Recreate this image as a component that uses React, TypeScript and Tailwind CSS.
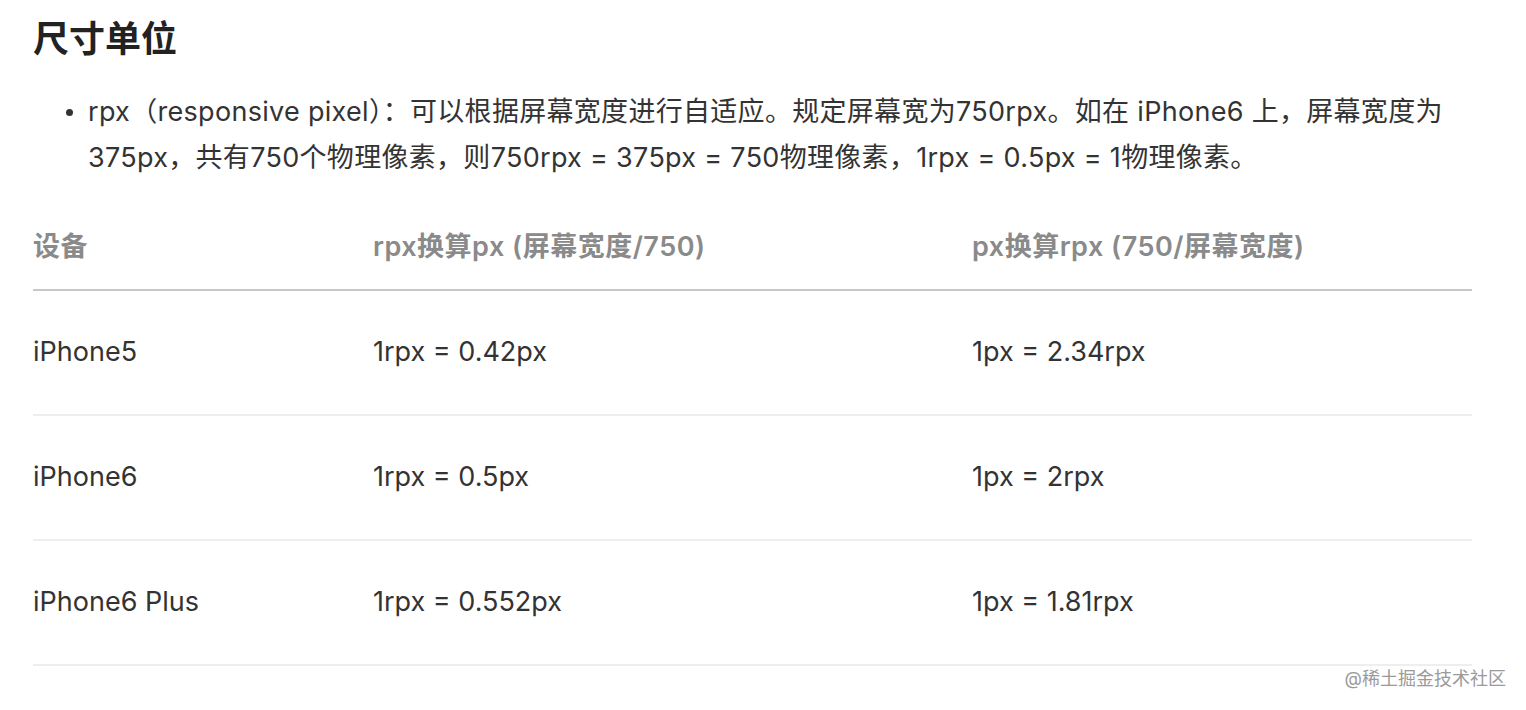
const ROWS = [
  { device: "iPhone5", toPx: "1rpx = 0.42px", toRpx: "1px = 2.34rpx" },
  { device: "iPhone6", toPx: "1rpx = 0.5px", toRpx: "1px = 2rpx" },
  { device: "iPhone6 Plus", toPx: "1rpx = 0.552px", toRpx: "1px = 1.81rpx" }
];

const FONT = "font-['Inter','Noto_Sans_CJK_SC',sans-serif]";

export default function App() {
  return (
    <div className={`relative h-[710px] w-[1526px] overflow-hidden bg-white px-[33px] pt-[15px] ${FONT}`}>
      <h2 className="text-[36px] font-bold leading-[48px] text-[#222]">尺寸单位</h2>

      <div className="mt-[26px] flex pl-[33px] text-[27px] leading-[46px] tracking-[0.3px] text-[#333]">
        <span className="mt-[20px] mr-[15px] h-[7px] w-[7px] shrink-0 rounded-full bg-[#333]" />
        <p className="pr-[10px]">
          rpx（responsive pixel）：可以根据屏幕宽度进行自适应。规定屏幕宽为750rpx。如在 iPhone6 上，屏幕宽度为375px，共有750个物理像素，则750rpx = 375px = 750物理像素，1rpx = 0.5px = 1物理像素。
        </p>
      </div>

      <table className="mt-[25px] w-[1439px] table-fixed border-collapse text-left text-[27px]">
        <colgroup>
          <col className="w-[340px]" />
          <col className="w-[599px]" />
          <col />
        </colgroup>
        <thead>
          <tr className="h-[84px] border-b-2 border-[#c8c8c8] text-[#8a8a8a]">
            <th className="font-semibold tracking-[0.5px]">设备</th>
            <th className="font-semibold tracking-[0.5px]">rpx换算px (屏幕宽度/750)</th>
            <th className="font-semibold tracking-[0.5px]">px换算rpx (750/屏幕宽度)</th>
          </tr>
        </thead>
        <tbody className="text-[#333]">
          {ROWS.map((row) => (
            <tr key={row.device} className="h-[125px] border-b-2 border-[#eeeeee]">
              <td>{row.device}</td>
              <td>{row.toPx}</td>
              <td>{row.toRpx}</td>
            </tr>
          ))}
        </tbody>
      </table>

      <span className="absolute right-[20px] bottom-[20px] text-[18px] leading-[22px] text-[#9a9a9a]">
        @稀土掘金技术社区
      </span>
    </div>
  );
}
